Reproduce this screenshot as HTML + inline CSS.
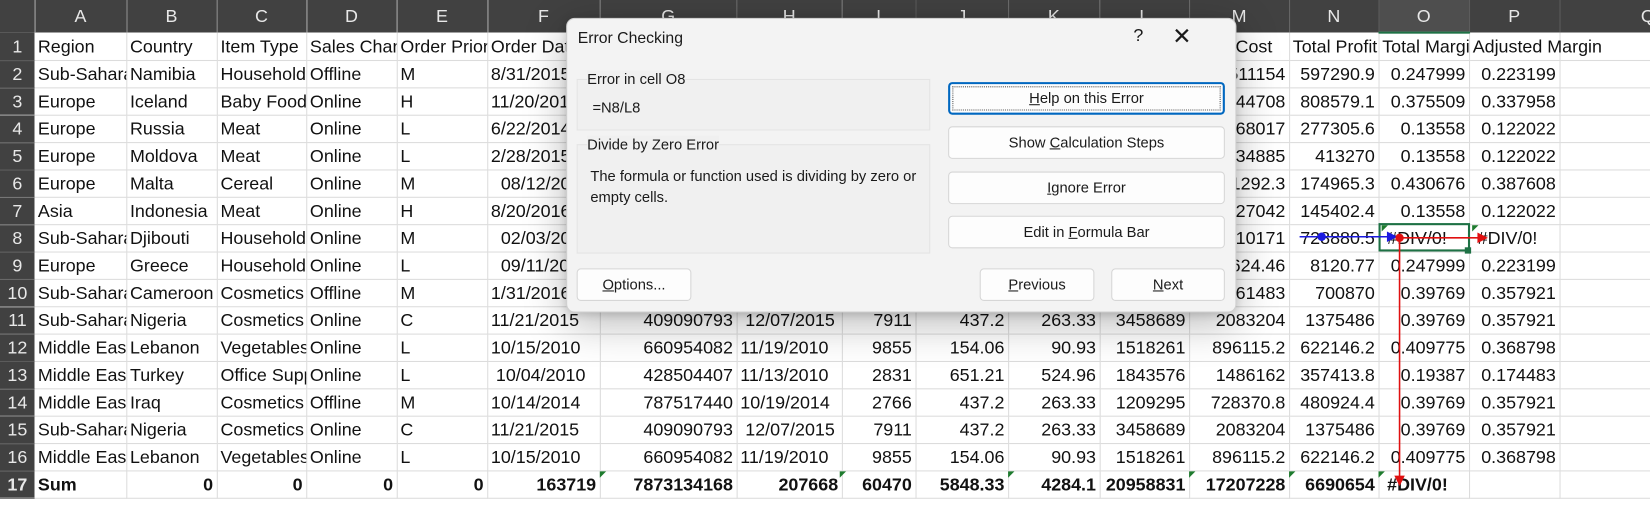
<!DOCTYPE html>
<html><head><meta charset="utf-8"><style>
*{box-sizing:border-box;margin:0;padding:0}
body{width:1650px;height:494px;overflow:hidden;background:#fff;font-family:"Liberation Sans",sans-serif;position:relative}
#w{position:absolute;left:0;top:0;width:1568px;height:470px;transform:scale(1.0523);transform-origin:0 0}
table{border-collapse:collapse;table-layout:fixed;position:absolute;left:0;top:0;width:1650px}
td{height:26px;font-size:17px;color:#111;border-right:1px solid #dcdcdc;border-bottom:1px solid #dcdcdc;white-space:nowrap;overflow:hidden;padding:0 3px;line-height:25px}
tr{height:26px}
td.r{text-align:right}
tr.h{height:31px}
tr.h td{height:31px;background:#414141;color:#e8e8e8;text-align:center;font-size:17px;border-right:1px solid #5a5a5a;border-bottom:none}
td.n{background:#414141;color:#e8e8e8;text-align:center;border-right:none;border-bottom:1px solid #5a5a5a;font-size:17px;padding:0}
tr.h td.sel{background:#4e4e4e;border-bottom:2px solid #1e7145}
td.ov{overflow:visible}
tr.b td{font-weight:bold}
.dlg{position:absolute;left:538px;top:17px;width:637px;height:280px;background:#f3f3f3;border:1px solid #cfcfcf;border-radius:8px;box-shadow:0 10px 40px rgba(0,0,0,.28),0 2px 8px rgba(0,0,0,.15);font-size:14px;color:#1a1a1a}
.dlg .t{position:absolute;left:10px;top:10px;font-size:15px}
.q{position:absolute;left:538px;top:6px;font-size:17px}
.x{position:absolute;left:575px;top:4px;font-size:22px;font-weight:300}
.grp{position:absolute;left:9px;width:336px;border:1px solid #e4e4e4;background:#f0f0f0}
.grp span{position:absolute;left:9px;top:-9px;background:#f0f0f0;font-size:14px}
.btn{position:absolute;background:#fdfdfd;border:1px solid #d6d6d6;border-radius:4px;text-align:center;font-size:14px;line-height:28px}
u{text-decoration:underline}
</style></head><body><div id="w">
<table>
<colgroup><col style="width:33px"><col style="width:87px"><col style="width:86px"><col style="width:85px"><col style="width:86px"><col style="width:86px"><col style="width:107px"><col style="width:130px"><col style="width:100px"><col style="width:70px"><col style="width:88px"><col style="width:87px"><col style="width:85px"><col style="width:95px"><col style="width:85px"><col style="width:86px"><col style="width:86px"><col style="width:168px"></colgroup>
<tr class="h"><td style="background:#414141"></td><td>A</td><td>B</td><td>C</td><td>D</td><td>E</td><td>F</td><td>G</td><td>H</td><td>I</td><td>J</td><td>K</td><td>L</td><td>M</td><td>N</td><td class="sel">O</td><td>P</td><td>Q</td></tr>
<tr><td class="n">1</td><td>Region</td><td>Country</td><td>Item Type</td><td>Sales Channel</td><td>Order Priority</td><td>Order Date</td><td>Order ID</td><td>Ship Date</td><td>Units Sold</td><td>Unit Price</td><td>Unit Cost</td><td>Total Revenue</td><td>Total Cost</td><td>Total Profit</td><td>Total Margin</td><td class="ov">Adjusted Margin</td><td></td></tr>
<tr><td class="n">2</td><td>Sub-Saharan Africa</td><td>Namibia</td><td>Household</td><td>Offline</td><td>M</td><td>8/31/2015</td><td></td><td></td><td></td><td></td><td></td><td></td><td class="r">1511154</td><td class="r">597290.9</td><td class="r">0.247999</td><td class="r">0.223199</td><td></td></tr>
<tr><td class="n">3</td><td>Europe</td><td>Iceland</td><td>Baby Food</td><td>Online</td><td>H</td><td>11/20/2010</td><td></td><td></td><td></td><td></td><td></td><td></td><td class="r">1144708</td><td class="r">808579.1</td><td class="r">0.375509</td><td class="r">0.337958</td><td></td></tr>
<tr><td class="n">4</td><td>Europe</td><td>Russia</td><td>Meat</td><td>Online</td><td>L</td><td>6/22/2014</td><td></td><td></td><td></td><td></td><td></td><td></td><td class="r">1768017</td><td class="r">277305.6</td><td class="r">0.13558</td><td class="r">0.122022</td><td></td></tr>
<tr><td class="n">5</td><td>Europe</td><td>Moldova</td><td>Meat</td><td>Online</td><td>L</td><td>2/28/2015</td><td></td><td></td><td></td><td></td><td></td><td></td><td class="r">2634885</td><td class="r">413270</td><td class="r">0.13558</td><td class="r">0.122022</td><td></td></tr>
<tr><td class="n">6</td><td>Europe</td><td>Malta</td><td>Cereal</td><td>Online</td><td>M</td><td>&nbsp;&nbsp;08/12/2014</td><td></td><td></td><td></td><td></td><td></td><td></td><td class="r">231292.3</td><td class="r">174965.3</td><td class="r">0.430676</td><td class="r">0.387608</td><td></td></tr>
<tr><td class="n">7</td><td>Asia</td><td>Indonesia</td><td>Meat</td><td>Online</td><td>H</td><td>8/20/2016</td><td></td><td></td><td></td><td></td><td></td><td></td><td class="r">927042</td><td class="r">145402.4</td><td class="r">0.13558</td><td class="r">0.122022</td><td></td></tr>
<tr><td class="n">8</td><td>Sub-Saharan Africa</td><td>Djibouti</td><td>Household</td><td>Online</td><td>M</td><td>&nbsp;&nbsp;02/03/2014</td><td></td><td></td><td></td><td></td><td></td><td></td><td class="r">2210171</td><td class="r">728880.5</td><td>&nbsp;#DIV/0!</td><td>&nbsp;#DIV/0!</td><td></td></tr>
<tr><td class="n">9</td><td>Europe</td><td>Greece</td><td>Household</td><td>Online</td><td>L</td><td>&nbsp;&nbsp;09/11/2013</td><td></td><td></td><td></td><td></td><td></td><td></td><td class="r">24624.46</td><td class="r">8120.77</td><td class="r">0.247999</td><td class="r">0.223199</td><td></td></tr>
<tr><td class="n">10</td><td>Sub-Saharan Africa</td><td>Cameroon</td><td>Cosmetics</td><td>Offline</td><td>M</td><td>1/31/2016</td><td></td><td></td><td></td><td></td><td></td><td></td><td class="r">1061483</td><td class="r">700870</td><td class="r">0.39769</td><td class="r">0.357921</td><td></td></tr>
<tr><td class="n">11</td><td>Sub-Saharan Africa</td><td>Nigeria</td><td>Cosmetics</td><td>Online</td><td>C</td><td>11/21/2015</td><td class="r">409090793</td><td>&nbsp;12/07/2015</td><td class="r">7911</td><td class="r">437.2</td><td class="r">263.33</td><td class="r">3458689</td><td class="r">2083204</td><td class="r">1375486</td><td class="r">0.39769</td><td class="r">0.357921</td><td></td></tr>
<tr><td class="n">12</td><td>Middle East</td><td>Lebanon</td><td>Vegetables</td><td>Online</td><td>L</td><td>10/15/2010</td><td class="r">660954082</td><td>11/19/2010</td><td class="r">9855</td><td class="r">154.06</td><td class="r">90.93</td><td class="r">1518261</td><td class="r">896115.2</td><td class="r">622146.2</td><td class="r">0.409775</td><td class="r">0.368798</td><td></td></tr>
<tr><td class="n">13</td><td>Middle East</td><td>Turkey</td><td>Office Supplies</td><td>Online</td><td>L</td><td>&nbsp;10/04/2010</td><td class="r">428504407</td><td>11/13/2010</td><td class="r">2831</td><td class="r">651.21</td><td class="r">524.96</td><td class="r">1843576</td><td class="r">1486162</td><td class="r">357413.8</td><td class="r">0.19387</td><td class="r">0.174483</td><td></td></tr>
<tr><td class="n">14</td><td>Middle East</td><td>Iraq</td><td>Cosmetics</td><td>Offline</td><td>M</td><td>10/14/2014</td><td class="r">787517440</td><td>10/19/2014</td><td class="r">2766</td><td class="r">437.2</td><td class="r">263.33</td><td class="r">1209295</td><td class="r">728370.8</td><td class="r">480924.4</td><td class="r">0.39769</td><td class="r">0.357921</td><td></td></tr>
<tr><td class="n">15</td><td>Sub-Saharan Africa</td><td>Nigeria</td><td>Cosmetics</td><td>Online</td><td>C</td><td>11/21/2015</td><td class="r">409090793</td><td>&nbsp;12/07/2015</td><td class="r">7911</td><td class="r">437.2</td><td class="r">263.33</td><td class="r">3458689</td><td class="r">2083204</td><td class="r">1375486</td><td class="r">0.39769</td><td class="r">0.357921</td><td></td></tr>
<tr><td class="n">16</td><td>Middle East</td><td>Lebanon</td><td>Vegetables</td><td>Online</td><td>L</td><td>10/15/2010</td><td class="r">660954082</td><td>11/19/2010</td><td class="r">9855</td><td class="r">154.06</td><td class="r">90.93</td><td class="r">1518261</td><td class="r">896115.2</td><td class="r">622146.2</td><td class="r">0.409775</td><td class="r">0.368798</td><td></td></tr>
<tr class="b"><td class="n">17</td><td>Sum</td><td class="r">0</td><td class="r">0</td><td class="r">0</td><td class="r">0</td><td class="r">163719</td><td class="r">7873134168</td><td class="r">207668</td><td class="r">60470</td><td class="r">5848.33</td><td class="r">4284.1</td><td class="r">20958831</td><td class="r">17207228</td><td class="r">6690654</td><td>&nbsp;#DIV/0!</td><td></td><td></td></tr>
</table>

<div style="position:absolute;left:1310px;top:212px;width:87px;height:27px;border:2px solid #1e7145"></div>
<div style="position:absolute;left:1392px;top:235px;width:6px;height:6px;background:#1e7145"></div>
<svg style="position:absolute;left:0;top:0" width="1650" height="494">
<line x1="1235" y1="225" x2="1322" y2="225" stroke="#1a1ae0" stroke-width="1.5"/>
<circle cx="1256" cy="225" r="4" fill="#1a1ae0"/>
<polygon points="1318,220 1328,225 1318,230" fill="#1a1ae0"/>
<line x1="1330" y1="226" x2="1410" y2="226" stroke="#e01010" stroke-width="1.5"/>
<circle cx="1330" cy="226" r="4" fill="#e01010"/>
<polygon points="1404,221 1414,226 1404,231" fill="#e01010"/>
<line x1="1330" y1="226" x2="1330" y2="458" stroke="#e01010" stroke-width="1.5"/>
<polygon points="1325,452 1330,462 1335,452" fill="#e01010"/>
<g fill="#1e7b2e"><polygon points="1313,214 1319,214 1313,220"/><polygon points="1399,214 1405,214 1399,220"/>
<polygon points="570,448 576,448 570,454"/><polygon points="798,448 804,448 798,454"/><polygon points="958,448 964,448 958,454"/><polygon points="1130,448 1136,448 1130,454"/><polygon points="1225,448 1231,448 1225,454"/><polygon points="1310,448 1316,448 1310,454"/></g>
</svg>

<div class="dlg">
  <div class="t">Error Checking</div>
  <div class="q">?</div>
  <div class="x">✕</div>
  <div class="grp" style="top:57px;height:49px"><span>Error in cell O8</span><div style="position:absolute;left:14px;top:18px">=N8/L8</div></div>
  <div class="grp" style="top:119px;height:104px"><span>Divide by Zero Error</span><div style="position:absolute;left:12px;top:19px;width:320px;line-height:20px">The formula or function used is dividing by zero or empty cells.</div></div>
  <div class="btn" style="left:362px;top:60px;width:263px;height:31px;border:2px solid #0067c0;line-height:27px"><div style="position:absolute;inset:2px;border:1px dotted #555"></div><u>H</u>elp on this Error</div>
  <div class="btn" style="left:362px;top:102px;width:263px;height:31px"><span>Show <u>C</u>alculation Steps</span></div>
  <div class="btn" style="left:362px;top:145px;width:263px;height:31px"><u>I</u>gnore Error</div>
  <div class="btn" style="left:362px;top:187px;width:263px;height:31px">Edit in <u>F</u>ormula Bar</div>
  <div class="btn" style="left:9px;top:237px;width:109px;height:31px"><u>O</u>ptions...</div>
  <div class="btn" style="left:392px;top:237px;width:109px;height:31px"><u>P</u>revious</div>
  <div class="btn" style="left:517px;top:237px;width:108px;height:31px"><u>N</u>ext</div>
</div>
</div></body></html>
